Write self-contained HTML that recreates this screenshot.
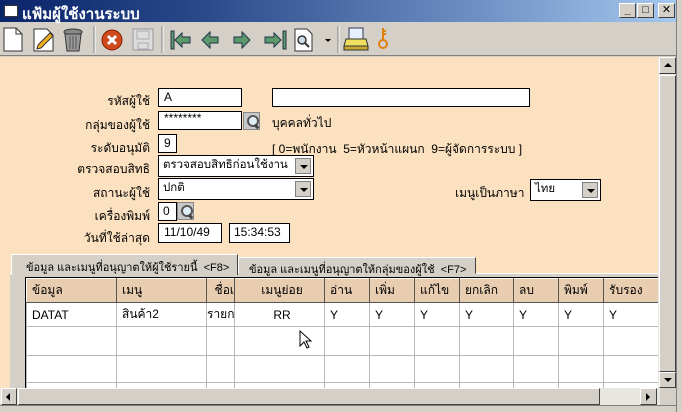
<!DOCTYPE html>
<html><head><meta charset="utf-8"><style>
*{margin:0;padding:0;box-sizing:border-box}
body{width:682px;height:412px;overflow:hidden;background:#d4d0c8;font-family:Tahoma,"Liberation Sans","DejaVu Sans",sans-serif;font-size:12px;color:#000;position:relative}
.a{position:absolute}
.title{left:0;top:0;width:682px;height:22px;background:linear-gradient(90deg,#0a246a 0%,#2a4a8a 30%,#6f90c4 70%,#a6caf0 100%)}
.title span{position:absolute;left:22px;top:2px;color:#fff;font-weight:bold;font-size:15px}
.wb{top:3px;width:17px;height:15px;background:#d4d0c8;border:1px solid;border-color:#fff #404040 #404040 #fff;font-size:11px;font-weight:bold;text-align:center;line-height:13px}
.content{left:0;top:57px;width:658px;height:331px;background:#fbe1bf}
.lbl{text-align:right;width:150px;left:0}
.in{background:#fff;border:1px solid #000;padding-left:5px;line-height:17px}
.cb{background:#fff;border:1px solid #000;padding-left:4px;line-height:18px;font-size:11.5px;overflow:hidden}
.cb i{position:absolute;right:2px;top:2px;width:16px;height:16px;background:#d4d0c8;border:1px solid #808080}
.cb i:after{content:"";position:absolute;left:4px;top:6px;border:4px solid transparent;border-top:4px solid #000;border-bottom:0}
.mag{width:17px;height:18px;background:#c8c8c8;border:1px solid #888}
.mag:before{content:"";position:absolute;left:3px;top:2px;width:8px;height:8px;border:2px solid #555;border-radius:50%;background:#e0eef8}
.mag:after{content:"";position:absolute;left:11px;top:11px;width:3px;height:5px;background:#444;transform:rotate(-45deg)}
table{border-collapse:collapse;table-layout:fixed}
td{border:1px solid #b8b8b8;height:24px;padding-left:5px;white-space:nowrap;overflow:hidden}
tr.h td{background:#e8cdb0;border-color:#fff #555 #555 #fff;border-width:1px}
.sb{background:#d4d0c8;border:1px solid;border-color:#fff #404040 #404040 #fff}
</style></head><body>
<div class="a title"><div class="a" style="left:4px;top:5px;width:14px;height:12px;background:#fff;border:1px solid #333"></div><span>แฟ้มผู้ใช้งานระบบ</span></div>
<div class="a wb" style="left:619px">_</div><div class="a wb" style="left:637px">□</div><div class="a wb" style="left:658px">✕</div>
<svg class="a" style="left:0;top:23px" width="400" height="33">
<path d="M4 5h12l6 6v17H4z" fill="#fff" stroke="#333"/><path d="M16 5v6h6" fill="none" stroke="#333"/>
<path d="M34 6h13l6 6v16H34z" fill="#fff" stroke="#333"/><path d="M38 22l12-12 3 3-12 12-4 1z" fill="#f0b020" stroke="#333"/>
<ellipse cx="73" cy="9" rx="9" ry="3" fill="#888" stroke="#333"/><path d="M65 11h16l-2 17H67z" fill="#999" stroke="#333"/><path d="M70 13v13M73 13v13M76 13v13" stroke="#555"/>
<line x1="94" y1="3" x2="94" y2="30" stroke="#808080"/><line x1="95" y1="3" x2="95" y2="30" stroke="#fff"/>
<circle cx="112" cy="17" r="10" fill="#d04a20" stroke="#802000"/><path d="M108 13l8 8M116 13l-8 8" stroke="#fff" stroke-width="3"/>
<rect x="133" y="6" width="20" height="21" fill="#ddd" stroke="#999"/><rect x="137" y="8" width="12" height="8" fill="none" stroke="#aaa"/><rect x="138" y="20" width="10" height="6" fill="none" stroke="#aaa"/>
<line x1="162" y1="3" x2="162" y2="30" stroke="#808080"/><line x1="163" y1="3" x2="163" y2="30" stroke="#fff"/>
<g fill="#5c9a6c" stroke="#234"><rect x="171" y="8" width="3" height="18"/><path d="M175 17l7-7v4h8v6h-8v4z"/>
<path d="M202 17l8-8v5h8v6h-8v5z"/><path d="M250 17l-8-8v5h-8v6h8v5z"/><path d="M281 17l-7-7v4h-9v6h9v4z"/><rect x="283" y="8" width="3" height="18"/></g>
<path d="M295 6h12l5 5v17h-17z" fill="#fff" stroke="#333"/><circle cx="302" cy="17" r="4" fill="#cde" stroke="#333" stroke-width="1.5"/><path d="M305 20l4 4" stroke="#333" stroke-width="2"/>
<path d="M325 16h6l-3 3z" fill="#000"/>
<line x1="338" y1="3" x2="338" y2="30" stroke="#808080"/><line x1="339" y1="3" x2="339" y2="30" stroke="#fff"/>
<rect x="349" y="5" width="14" height="11" fill="#e8f0ff" stroke="#335"/><path d="M346 16h20l2 7h-24z" fill="#f0e060" stroke="#333"/><rect x="344" y="23" width="24" height="4" fill="#c8a830" stroke="#333"/>
<circle cx="383" cy="21" r="4" fill="none" stroke="#e08010" stroke-width="2"/><path d="M383 17V5M383 8h3M383 11h3" stroke="#e08010" stroke-width="2"/>
</svg>
<div class="a" style="left:0;top:55px;width:682px;height:1px;background:#808080"></div>
<div class="a content"></div>
<div class="a" style="left:658px;top:57px;width:18px;height:331px;background:#e8e6e0"></div>
<div class="a sb" style="left:659px;top:57px;width:17px;height:17px"></div><div class="a" style="left:664px;top:63px;border:4px solid transparent;border-bottom:4px solid #000;border-top:0"></div>
<div class="a sb" style="left:659px;top:75px;width:17px;height:297px"></div>
<div class="a sb" style="left:659px;top:372px;width:17px;height:16px"></div><div class="a" style="left:664px;top:378px;border:4px solid transparent;border-top:4px solid #000;border-bottom:0"></div>
<div class="a lbl" style="top:92px">รหัสผู้ใช้</div>
<div class="a in" style="left:158px;top:88px;width:84px;height:19px">A</div>
<div class="a in" style="left:272px;top:88px;width:258px;height:19px"></div>
<div class="a lbl" style="top:116px">กลุ่มของผู้ใช้</div>
<div class="a in" style="left:158px;top:111px;width:84px;height:19px;line-height:12px">********</div>
<div class="a mag" style="left:243px;top:112px"></div>
<div class="a" style="left:272px;top:114px">บุคคลทั่วไป</div>
<div class="a lbl" style="top:139px">ระดับอนุมัติ</div>
<div class="a in" style="left:158px;top:134px;width:19px;height:19px">9</div>
<div class="a" style="left:272px;top:140px">[ 0=พนักงาน&nbsp; 5=หัวหน้าแผนก&nbsp; 9=ผู้จัดการระบบ ]</div>
<div class="a lbl" style="top:160px">ตรวจสอบสิทธิ</div>
<div class="a cb" style="left:158px;top:155px;width:156px;height:22px">ตรวจสอบสิทธิก่อนใช้งาน<i></i></div>
<div class="a lbl" style="top:184px">สถานะผู้ใช้</div>
<div class="a cb" style="left:158px;top:178px;width:156px;height:22px">ปกติ<i></i></div>
<div class="a" style="left:455px;top:184px">เมนูเป็นภาษา</div>
<div class="a cb" style="left:530px;top:179px;width:71px;height:22px">ไทย<i></i></div>
<div class="a lbl" style="top:207px">เครื่องพิมพ์</div>
<div class="a in" style="left:158px;top:202px;width:19px;height:19px;padding-left:4px">0</div>
<div class="a mag" style="left:177px;top:202px"></div>
<div class="a lbl" style="top:229px">วันที่ใช้ล่าสุด</div>
<div class="a in" style="left:158px;top:223px;width:64px;height:20px">11/10/49</div>
<div class="a in" style="left:229px;top:223px;width:61px;height:20px;padding-left:4px">15:34:53</div>
<div class="a" style="left:10px;top:273px;width:648px;height:115px;background:#d4d0c8;border-top:1px solid #fff"></div>
<div class="a" style="left:238px;top:257px;width:238px;height:17px;background:#d4d0c8;border:1px solid;border-color:#fff #404040 transparent #fff;font-size:11px;padding:2px 0 0 10px">ข้อมูล และเมนูที่อนุญาตให้กลุ่มของผู้ใช้&nbsp; &lt;F7&gt;</div>
<div class="a" style="left:11px;top:254px;width:227px;height:21px;background:#d4d0c8;border:1px solid;border-color:#fff #404040 transparent #fff;border-bottom:0;font-size:11px;padding:3px 0 0 14px">ข้อมูล และเมนูที่อนุญาตให้ผู้ใช้รายนี้&nbsp; &lt;F8&gt;</div>
<div class="a" style="left:25px;top:277px;width:633px;height:111px;background:#fff;border-left:1px solid #000;border-top:1px solid #000;overflow:hidden">
<table style="width:640px">
<colgroup><col style="width:90px"><col style="width:90px"><col style="width:28px"><col style="width:90px"><col style="width:45px"><col style="width:45px"><col style="width:45px"><col style="width:54px"><col style="width:45px"><col style="width:45px"><col style="width:63px"></colgroup>
<tr class="h"><td>ข้อมูล</td><td>เมนู</td><td style="text-align:right;padding:0">ชื่อเ</td><td style="text-align:center">เมนูย่อย</td><td>อ่าน</td><td>เพิ่ม</td><td>แก้ไข</td><td>ยกเลิก</td><td>ลบ</td><td>พิมพ์</td><td>รับรอง</td></tr>
<tr><td>DATAT</td><td>สินค้า2</td><td style="text-align:right;padding:0">รายก</td><td style="text-align:center">RR</td><td>Y</td><td>Y</td><td>Y</td><td>Y</td><td>Y</td><td>Y</td><td>Y</td></tr>
<tr><td style="height:29px"></td><td></td><td></td><td></td><td></td><td></td><td></td><td></td><td></td><td></td><td></td></tr>
<tr><td style="height:27px"></td><td></td><td></td><td></td><td></td><td></td><td></td><td></td><td></td><td></td><td></td></tr>
<tr><td></td><td></td><td></td><td></td><td></td><td></td><td></td><td></td><td></td><td></td><td></td></tr>
</table></div>
<svg class="a" style="left:299px;top:330px" width="14" height="20"><path d="M1 1v15l4-4 3 6 2-1-3-6h5z" fill="#fff" stroke="#000"/></svg>
<div class="a" style="left:0;top:388px;width:660px;height:17px;background:#e8e6e0"></div>
<div class="a sb" style="left:1px;top:388px;width:16px;height:17px"></div><div class="a" style="left:6px;top:393px;border:4px solid transparent;border-right:4px solid #000;border-left:0"></div>
<div class="a sb" style="left:18px;top:388px;width:582px;height:17px"></div>
<div class="a sb" style="left:640px;top:388px;width:17px;height:17px"></div><div class="a" style="left:646px;top:393px;border:4px solid transparent;border-left:4px solid #000;border-right:0"></div>
<div class="a" style="left:0;top:405px;width:682px;height:1px;background:#808080"></div>
<div class="a" style="left:676px;top:0;width:6px;height:412px;background:#d4d0c8;border-left:1px solid #808080"></div>
</body></html>
